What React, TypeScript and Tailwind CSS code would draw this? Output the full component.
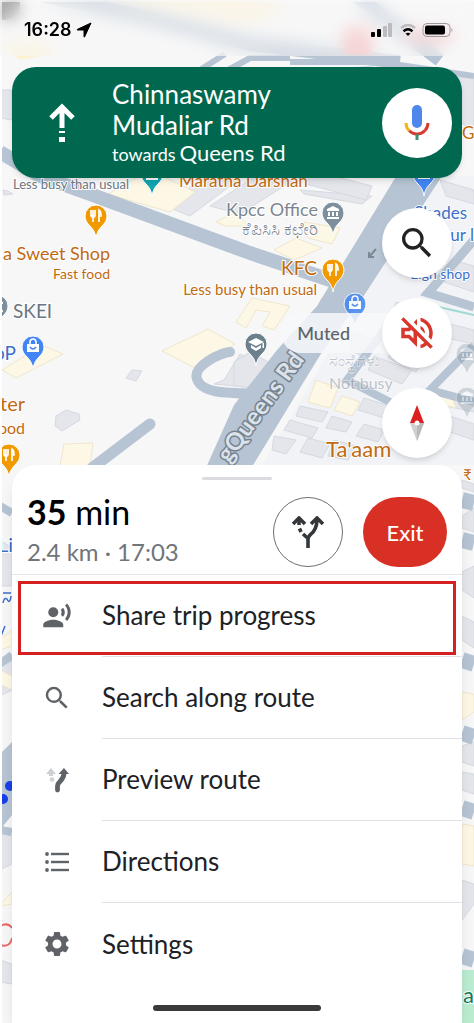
import type { ReactNode } from 'react';
import { MdOutlineVolumeOff, MdRecordVoiceOver, MdSearch, MdSettings } from 'react-icons/md';

type PinKind = 'food' | 'shop' | 'school' | 'civic' | 'museum';

const pinColors: Record<PinKind, string> = {
  food: '#f29900',
  shop: '#4285f4',
  school: '#6b7f8d',
  civic: '#7d8f9c',
  museum: '#12a4af',
};

const orange = '#bf6a10';
const blue = '#3b6fc9';
const gray = '#6b7580';

const buildings = [
  '165,206 205,176 238,180 190,216',
  '210,206 262,172 300,176 240,214',
  '300,190 372,196 362,204 304,194',
  '310,170 372,186 366,200 306,184',
  '330,70 372,66 392,110 340,100',
  '445,80 474,76 474,130 456,120',
  '440,180 474,190 474,204 446,196',
  '452,260 474,266 474,292 444,282',
  '396,302 424,312 412,330 390,320',
  '398,338 430,350 416,372 388,358',
  '374,356 412,370 402,384 368,370',
  '442,322 474,330 474,344 436,336',
  '352,332 380,342 366,358 350,350',
  '300,406 328,412 322,422 296,416',
  '290,420 318,428 312,438 284,430',
  '332,416 352,422 346,432 326,428',
  '274,436 296,440 286,454 272,450',
  '308,438 330,444 322,458 300,452',
  '334,440 356,446 348,460 328,456',
  '364,398 390,406 384,418 358,410',
  '364,424 384,430 378,442 356,436',
  '440,390 474,400 474,412 436,404',
  '450,416 474,424 474,440 444,430',
  '224,380 240,354 262,366 254,388 214,384',
  '234,362 250,352 276,366 258,388 234,386',
  '126,378 132,370 142,371 136,381',
  '56,416 66,410 79,414 80,420 62,431 55,426',
  '3,190 8,191 13,194 4,195',
  '0,90 12,90 12,120 0,118',
  '0,540 12,548 12,586 0,586',
  '0,672 12,660 12,690 0,696',
  '0,830 12,836 12,864 0,870',
  '0,960 12,964 12,984 0,982',
  '462,480 474,484 474,492 462,488',
  '462,516 474,508 474,532 462,528',
  '462,572 474,566 474,598 462,590',
  '462,616 474,622 474,648 462,640',
  '462,746 474,742 474,766 462,762',
  '462,772 474,774 474,794 462,790',
  '462,880 474,884 474,904 462,920',
];

const yellowBuildings = [
  '108,194 150,170 195,192 170,212',
  '162,351 208,329 235,344 197,369',
  '2,370 42,345 63,354 16,378',
  '64,444 93,443 90,466 60,466',
  '236,322 252,298 290,306 274,330 262,326 270,312 256,310 246,328',
  '274,250 296,238 322,248 294,260',
  '304,222 340,228 332,244 308,238',
  '216,222 236,212 248,226 226,226',
  '320,300 334,288 344,293 326,306',
  '308,402 316,380 338,388 330,408',
  '334,410 342,396 360,402 352,416',
  '434,392 452,396 456,408 438,404',
  '0,640 12,630 12,646 0,650',
  '0,670 12,676 12,690 0,684',
  '462,692 474,694 474,712 462,720',
  '462,824 474,826 474,866 462,864',
  '0,905 12,892 12,904 0,906',
];

function MapPin({ x, y, kind, opacity = 1 }: { x: number; y: number; kind: PinKind; opacity?: number }) {
  return (
    <g transform={`translate(${x} ${y})`} opacity={opacity}>
      <path
        d="M0 30C-1 24-3 21-6 18C-9 15-11 12-11 8A11 11 0 0 1 11 8C11 12 9 15 6 18C3 21 1 24 0 30Z"
        fill={pinColors[kind]}
        stroke="#fff"
        strokeWidth="1"
      />
      {kind === 'food' && (
        <path
          d="M-5 2V7Q-5 9-3 9V14M-3 2V9M-1 2V7Q-1 9-3 9M3 14V2Q5 3 5 8H3"
          fill="none"
          stroke="#fff"
          strokeWidth="1.7"
        />
      )}
      {kind === 'shop' && (
        <g fill="none" stroke="#fff" strokeWidth="1.6">
          <path d="M-3 5V3A3 3 0 0 1 3 3V5" />
          <path d="M-6 5H6V13H-6Z" fill="#fff" stroke="none" />
          <path d="M-3 8Q0 12 3 8" stroke="#4285f4" />
        </g>
      )}
      {kind === 'school' && (
        <path d="M0 2L8 6L0 10L-8 6ZM-5 9L0 12L5 9V12L0 15L-5 12ZM6.500 7H8V12H6.500Z" fill="#fff" />
      )}
      {(kind === 'civic' || kind === 'museum') && (
        <path d="M0 1L6 4V6H-6V4ZM-5 7H-3V11H-5ZM-1 7H1V11H-1ZM3 7H5V11H3ZM-6 12H6V14H-6Z" fill="#fff" />
      )}
    </g>
  );
}

type LabelProps = {
  x: number;
  y: number;
  size: number;
  color: string;
  end?: boolean;
  opacity?: number;
  children: string;
};

function MapLabel({ x, y, size, color, end, opacity = 1, children }: LabelProps) {
  return (
    <text
      x={x}
      y={y}
      fontSize={size}
      fill={color}
      opacity={opacity}
      textAnchor={end ? 'end' : 'start'}
      stroke="#fff"
      strokeWidth="2"
      strokeLinejoin="round"
      paintOrder="stroke"
    >
      {children}
    </text>
  );
}

function MapCanvas() {
  return (
    <svg
      className="absolute inset-0 h-full w-full"
      viewBox="0 0 474 1023"
      preserveAspectRatio="xMidYMin slice"
      aria-hidden="true"
    >
      <rect width="474" height="1023" fill="#f7f7f8" />
      <path d="M434 176H474V465H262L360 300Z" fill="#f1f3f6" />
      {/* area under the status bar */}
      <g>
        <path d="M40 -5L150 18L250 44L400 62" fill="none" stroke="#b6c4d3" strokeWidth="14" />
        <path d="M355 -5L400 30L440 60" fill="none" stroke="#b6c4d3" strokeWidth="14" />
        <path d="M342 28H372V54H345ZM405 30H452V42H410Z" fill="#f7b0b0" />
        <path d="M70 -4L180 -4L290 6L250 24Z" fill="#fdf1d4" />
        <path d="M0 44L40 40L60 52L20 60Z" fill="#fdf1d4" />
        <circle cx="5" cy="5" r="15" fill="#4d4d4d" />
      </g>

      {buildings.map((points) => (
        <polygon key={points} points={points} fill="#e4e6ec" stroke="#d5d9e0" strokeWidth="1" />
      ))}
      {yellowBuildings.map((points) => (
        <polygon key={points} points={points} fill="#fdf8e6" stroke="#efe6cb" strokeWidth="1" />
      ))}

      <g fill="none" stroke="#b6c4d3">
        <path d="M200 70L225 54M228 70L250 58H290M290 62L380 62L474 76" strokeWidth="6" />
        <path d="M0 152L40 176L90 194L250 253L345 285" strokeWidth="14" />
        <path d="M230 352C222 352 192 366 197 379C202 394 226 393 268 394" strokeWidth="10" strokeLinecap="round" />
        <path d="M150 424L92 468" strokeWidth="11" strokeLinecap="round" />
        <path d="M474 240L428 293L474 307" strokeWidth="9" />
        <path d="M474 345L430 390L474 402" strokeWidth="8" />
        <path d="M388 325L347 380L390 402L425 410" strokeWidth="8" />
        <path d="M0 506L12 513M0 664L12 655M0 830L12 832" strokeWidth="8" />
        <path d="M462 500L474 503M462 540L474 543M462 660L474 664M462 733L474 737M462 808L474 812M462 956L474 960" strokeWidth="16" />
      </g>
      <path d="M400 170H446L361 300L322 352L250 470H205L234 405L277 350L317 306Z" fill="#b6c4d3" />
      <path d="M0 754L12 742V815L0 830Z" fill="#b6c4d3" />
      <path d="M430 305L474 315" stroke="#9fd9d4" strokeWidth="2" />
      <path d="M376 249L369 257M369 252V257H374" fill="none" stroke="#7b8794" strokeWidth="2" />
      <rect x="462" y="970" width="12" height="53" fill="#b9ecd0" />
      <g fill="#1a3ee8">
        <circle cx="10" cy="786" r="5" />
        <circle cx="3" cy="799" r="5" />
      </g>
      <path d="M0 926Q8 922 12 928M0 945Q10 948 12 938" fill="none" stroke="#ea6a6a" strokeWidth="2" />
      <path d="M3 593H11M3 603Q4 597 7 599Q10 605 11 596M1 636L5 626" fill="none" stroke="#3b6fc9" strokeWidth="1.500" />

      <g fontFamily="Lato, 'Noto Sans', sans-serif">
        <text
          transform="translate(229 464) rotate(-54)"
          fontSize="24"
          fontWeight="700"
          fill="#dbe2ea"
          stroke="#76828f"
          strokeWidth="3"
          strokeLinejoin="round"
          paintOrder="stroke"
        >
          gQueens Rd
        </text>

        <MapPin x={152} y={166} kind="museum" />
        <MapPin x={424} y={166} kind="shop" />
        <MapPin x={96} y={208} kind="food" />
        <MapPin x={333} y={205} kind="civic" />
        <MapPin x={333} y={262} kind="food" />
        <MapPin x={355} y={296} kind="shop" opacity={0.85} />
        <MapPin x={256} y={336} kind="school" />
        <MapPin x={-3} y={298} kind="civic" />
        <MapPin x={33} y={339} kind="shop" />
        <MapPin x={9} y={447} kind="food" />
        <MapPin x={467} y={346} kind="civic" opacity={0.3} />
        <MapPin x={467} y={390} kind="civic" opacity={0.3} />

        <MapLabel x={13} y={189} size={13} color={gray}>Less busy than usual</MapLabel>
        <MapLabel x={179} y={187} size={17} color={orange}>Maratha Darshan</MapLabel>
        <MapLabel x={462} y={139} size={17} color={orange}>G</MapLabel>
        <MapLabel x={318} y={216} size={18} color="#7d868f" end>Kpcc Office</MapLabel>
        <MapLabel x={318} y={235} size={17} color="#7d868f" end>ಕೆಪಿಸಿಸಿ ಕಛೇರಿ</MapLabel>
        <MapLabel x={110} y={260} size={18} color={orange} end>a Sweet Shop</MapLabel>
        <MapLabel x={110} y={279} size={14} color={orange} end>Fast food</MapLabel>
        <MapLabel x={317} y={275} size={19} color={orange} end>KFC</MapLabel>
        <MapLabel x={317} y={295} size={15} color={orange} end>Less busy than usual</MapLabel>
        <MapLabel x={13} y={318} size={19} color={gray}>SKEI</MapLabel>
        <MapLabel x={16} y={360} size={19} color={blue} end>oP</MapLabel>
        <MapLabel x={25} y={411} size={20} color={orange} end>ter</MapLabel>
        <MapLabel x={25} y={434} size={16} color={orange} end>ood</MapLabel>
        <MapLabel x={467} y={219} size={17} color={blue} end>Shades</MapLabel>
        <MapLabel x={474} y={241} size={17} color={blue} end>ur l</MapLabel>
        <MapLabel x={470} y={279} size={14} color={blue} end>Eigh shop</MapLabel>
        <MapLabel x={329} y={366} size={16} color="#8c949d" opacity={0.45}>ಸಂಸ್ಥೆಗಳು</MapLabel>
        <MapLabel x={329} y={389} size={16} color="#8c949d" opacity={0.5}>Not busy</MapLabel>
        <MapLabel x={326} y={457} size={22} color={orange}>Ta'aam</MapLabel>
        <MapLabel x={463} y={480} size={15} color={orange}>₹</MapLabel>
        <MapLabel x={-2} y={552} size={20} color={blue}>Li</MapLabel>
        <MapLabel x={463} y={1003} size={22} color="#137a56">a</MapLabel>
      </g>
      <rect width="2" height="1023" fill="#fff" />
      <rect width="474" height="2" fill="#fff" />
    </svg>
  );
}

function StatusBar() {
  return (
    <header className="relative flex h-14 items-center justify-between bg-[#f7f7f8]/50 pt-1 pr-5 pl-6 backdrop-blur-sm">
      <div className="flex items-center gap-1 font-['Inter',sans-serif] text-lg font-semibold text-black">
        <span>16:28</span>
        <svg className="h-4 w-4" viewBox="0 0 16 16" aria-hidden="true">
          <path d="M15 1L8.500 15Q8 15.500 8 14.500V8H1.500Q.5 8 1.500 7.300Z" fill="#000" stroke="#000" strokeLinejoin="round" />
        </svg>
      </div>
      <div className="flex items-center gap-1.5">
        <svg className="h-4 w-6" viewBox="0 0 24 16" aria-hidden="true">
          <rect x="1" y="10" width="4" height="5" rx="1" />
          <rect x="7" y="7" width="4" height="8" rx="1" />
          <rect x="13" y="4" width="4" height="11" rx="1" fill="#bcbcc0" />
          <rect x="18" y="1" width="4" height="14" rx="1" fill="#bcbcc0" />
        </svg>
        <svg className="h-4 w-4" viewBox="0 0 16 16" fill="none" aria-hidden="true">
          <path d="M1 6Q8 0 15 6" stroke="#bcbcc0" strokeWidth="2.500" />
          <path d="M3.500 9.200Q8 5.500 12.500 9.200" stroke="#000" strokeWidth="2.400" />
          <path d="M5.500 11.500Q8 9.800 10.500 11.500L8 14Z" fill="#000" />
        </svg>
        <svg className="h-4 w-8" viewBox="0 0 32 16" aria-hidden="true">
          <rect x="1" y="1.500" width="27" height="13" rx="4" fill="none" stroke="#9a9a9e" />
          <rect x="3" y="3.500" width="20" height="9" rx="2" />
          <path d="M29.500 6V10Q31.500 8 29.500 6Z" fill="#9a9a9e" />
        </svg>
      </div>
    </header>
  );
}

function DirectionBanner() {
  return (
    <section className="relative mx-3 mt-[11px] flex items-center rounded-3xl bg-[#00684f] py-3 pr-2.5 pl-9 text-white shadow-md">
      <svg className="h-10 w-7 shrink-0" viewBox="0 0 28 40" aria-hidden="true">
        <path d="M14 25V4M3 15L14 4L25 15" fill="none" stroke="#fff" strokeWidth="5" />
        <path d="M11 28H17V30H11ZM11 34H17V39H11Z" fill="#fff" />
      </svg>
      <div className="ml-9 flex-1">
        <h1 className="max-w-52 text-[26px] leading-[31px] font-normal">Chinnaswamy Mudaliar Rd</h1>
        <p className="flex items-baseline gap-1 text-[22px] leading-6">
          <span className="text-lg leading-6">towards</span>
          <span>Queens Rd</span>
        </p>
      </div>
      <button
        type="button"
        aria-label="Voice search"
        className="flex h-[70px] w-[70px] shrink-0 items-center justify-center rounded-full bg-white"
      >
        <svg className="h-9 w-7" viewBox="0 0 28 36" fill="none" aria-hidden="true">
          <rect x="9" y="0" width="10" height="23" rx="5" fill="#4f86ec" />
          <path d="M3 18A11 11 0 0 0 6.200 25.800" stroke="#f2b21b" strokeWidth="3" />
          <path d="M6.200 25.800A11 11 0 0 0 22 25.500" stroke="#d93a30" strokeWidth="3" />
          <path d="M22 25.500A11 11 0 0 0 25 18" stroke="#d93a30" strokeWidth="3" />
          <path d="M14 29V35" stroke="#3f8f6c" strokeWidth="3" />
        </svg>
      </button>
    </section>
  );
}

function RoundButton({ label, children }: { label: string; children: ReactNode }) {
  return (
    <button
      type="button"
      aria-label={label}
      className="flex h-[70px] w-[70px] items-center justify-center rounded-full bg-white shadow-md"
    >
      {children}
    </button>
  );
}

function MapControls() {
  return (
    <div className="relative mt-[30px] flex flex-col items-end gap-5 pr-[22px]">
      <RoundButton label="Search">
        <MdSearch className="h-10 w-10 text-[#222222]" />
      </RoundButton>
      <div className="flex items-center">
        <span className="rounded-l-full bg-[#f7f8fa]/85 py-1.5 pr-11 pl-4 text-lg leading-7 font-medium text-[#5f6368]">
          Muted
        </span>
        <div className="-ml-3">
          <RoundButton label="Unmute">
            <MdOutlineVolumeOff className="h-[42px] w-[42px] text-[#d9362c]" />
          </RoundButton>
        </div>
      </div>
      <RoundButton label="Compass">
        <svg className="h-9 w-4" viewBox="0 0 16 36" aria-hidden="true">
          <path d="M8 0L15 18H1Z" fill="#dc1f1f" />
          <path d="M1 18H15L8 36Z" fill="#d0d0d0" />
          <path d="M8 18H15L8 36Z" fill="#b9b9b9" />
          <circle cx="8" cy="18" r="2.500" fill="#fff" />
        </svg>
      </RoundButton>
    </div>
  );
}

function RoutesIcon() {
  return (
    <svg className="h-8 w-8" viewBox="0 0 32 32" fill="none" stroke="#35383b" aria-hidden="true">
      <path d="M16 32V23Q16 21 18 19Q25 14 25 3" strokeWidth="3.600" />
      <path d="M19 8L25 2L31 8" strokeWidth="3.600" />
      <path d="M1 8L7 2L13 8" strokeWidth="3.600" />
      <path d="M7 2V9" strokeWidth="3.600" />
      <path d="M7.500 12.500L9 16M11 18L15.500 22" strokeWidth="3.600" />
    </svg>
  );
}

function PreviewIcon() {
  return (
    <svg className="h-[30px] w-[30px]" viewBox="0 0 30 30" aria-hidden="true">
      <path d="M15.500 25V21C15.500 16 22 16 22 8" fill="none" stroke="#5f6368" strokeWidth="4.800" strokeLinecap="round" />
      <path d="M16.500 9L22 3L27 9Z" fill="#5f6368" />
      <path d="M4 9L9 3L14 9H11V11H7V9Z" fill="#cfd1d3" />
      <circle cx="10" cy="14.500" r="2.300" fill="#cfd1d3" />
    </svg>
  );
}

function ListIcon() {
  return (
    <svg className="h-[30px] w-[30px]" viewBox="0 0 30 30" fill="#5f6368" aria-hidden="true">
      {[7, 15, 23].map((y) => (
        <g key={y}>
          <circle cx="5" cy={y} r="1.900" />
          <rect x="9" y={y - 1.2} width="18" height="2.400" />
        </g>
      ))}
    </svg>
  );
}

const menuItems = [
  { label: 'Share trip progress', icon: <MdRecordVoiceOver className="h-[30px] w-[30px]" />, highlighted: true },
  { label: 'Search along route', icon: <MdSearch className="h-[30px] w-[30px]" /> },
  { label: 'Preview route', icon: <PreviewIcon /> },
  { label: 'Directions', icon: <ListIcon /> },
  { label: 'Settings', icon: <MdSettings className="h-[30px] w-[30px]" /> },
];

function TripSheet() {
  return (
    <main className="relative mx-3 mt-[7px] flex flex-1 flex-col rounded-t-3xl bg-white pt-3 shadow-lg">
      <div className="mx-auto h-[3px] w-[70px] rounded-full bg-[#dadce0]" />
      <div className="mt-3 flex items-center border-b border-[#e4e5e7] px-[15px] pb-0.5">
        <div className="flex-1">
          <p className="text-[34px] leading-10 text-black">
            <strong className="font-bold">35</strong> min
          </p>
          <p className="text-2xl leading-10 text-[#70757a]">2.4 km · 17:03</p>
        </div>
        <button
          type="button"
          aria-label="Alternate routes"
          className="flex h-[70px] w-[70px] items-center justify-center rounded-full border border-[#6b6e72] bg-white"
        >
          <RoutesIcon />
        </button>
        <button
          type="button"
          className="ml-5 h-[70px] w-[84px] rounded-[35px] bg-[#d93025] text-[22px] font-medium text-white"
        >
          Exit
        </button>
      </div>
      <ul>
        {menuItems.map((item, index) => (
          <li key={item.label} className="relative">
            <button type="button" className="flex w-full items-stretch pl-[30px] text-left">
              <span className="flex w-[60px] items-center text-[#5f6368]">{item.icon}</span>
              <span
                className={`flex h-[82px] flex-1 items-center text-[26px] text-[#202124] ${
                  index < menuItems.length - 1 ? 'border-b border-[#dfe1e4]' : ''
                }`}
              >
                {item.label}
              </span>
            </button>
            {item.highlighted && (
              <div className="pointer-events-none absolute inset-x-1.5 top-1.5 bottom-0.5 border-3 border-[#d42020]" />
            )}
          </li>
        ))}
      </ul>
      <div className="mx-auto mt-auto mb-3 h-1.5 w-[168px] rounded-full bg-[#3a3a3c]" />
    </main>
  );
}

export default function App() {
  return (
    <div className="relative flex min-h-screen flex-col overflow-hidden bg-[#f7f7f8] font-['Lato','Noto_Sans',sans-serif]">
      <MapCanvas />
      <StatusBar />
      <DirectionBanner />
      <MapControls />
      <TripSheet />
    </div>
  );
}
